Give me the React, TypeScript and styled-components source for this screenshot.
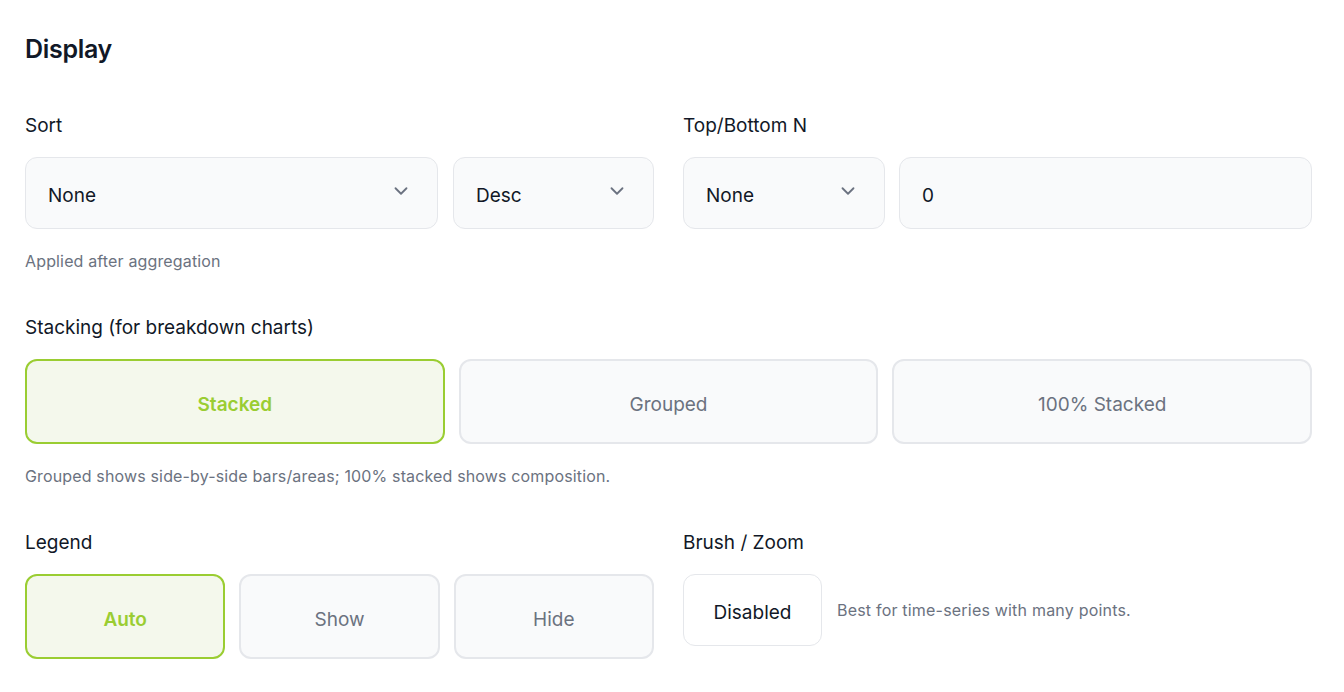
import { memo } from "react";
import styled, { createGlobalStyle } from "styled-components";
import { ChevronDown } from "lucide-react";

const GlobalStyle = createGlobalStyle`
  body {
    margin: 0;
    background: #fff;
    font-family: Inter, "Noto Sans", sans-serif;
    color: #111827;
  }
`;

const Panel = styled.main`
  padding: 32px 32px 0 25px;
  > h2 {
    margin: 0 0 48px;
    font-size: 25px;
    font-weight: 600;
    letter-spacing: -0.3px;
    line-height: 34px;
  }
`;

const Row = styled.div`
  display: grid;
  grid-template-columns: 1fr 1fr;
  column-gap: 29px;
`;

const Field = styled.section<{ $mb?: number }>`
  margin-bottom: ${(p) => p.$mb ?? 0}px;
`;

const Label = styled.h3`
  margin: 0 0 19px;
  font-size: 19px;
  font-weight: 400;
  line-height: 24px;
`;

const Controls = styled.div<{ $gap?: number }>`
  display: flex;
  gap: ${(p) => p.$gap ?? 15}px;
  align-items: center;
`;

const Select = styled.div<{ $w?: number }>`
  display: flex;
  align-items: center;
  justify-content: space-between;
  box-sizing: border-box;
  height: 72px;
  padding: 4px 25px 0 22px;
  ${(p) => (p.$w ? `width: ${p.$w}px; flex: none;` : "flex: 1;")}
  background: #f9fafb;
  border: 1px solid #e5e7eb;
  border-radius: 12px;
  font-size: 19px;
  color: #111827;
  .lucide {
    width: 22px;
    height: 22px;
    margin-top: -8px;
    color: #6b7280;
  }
`;

const Hint = styled.p`
  margin: 22px 0 0;
  font-size: 16px;
  letter-spacing: 0.15px;
  color: #6b7280;
  line-height: 20px;
`;

const Segments = styled.div<{ $cols: number }>`
  display: grid;
  grid-template-columns: repeat(${(p) => p.$cols}, 1fr);
  gap: 14px;
`;

const Segment = styled.button<{ $active?: boolean; $h: number }>`
  box-sizing: border-box;
  height: ${(p) => p.$h}px;
  padding-top: 6px;
  border-radius: 12px;
  border: 2.5px solid ${(p) => (p.$active ? "#9acd32" : "#e5e7eb")};
  background: ${(p) => (p.$active ? "#f4f8ec" : "#f9fafb")};
  color: ${(p) => (p.$active ? "#9acd32" : "#6b7280")};
  font-family: inherit;
  font-size: 19px;
  font-weight: ${(p) => (p.$active ? 600 : 400)};
  cursor: pointer;
`;

const Toggle = styled.button`
  box-sizing: border-box;
  width: 139px;
  height: 72px;
  flex: none;
  padding-top: 5px;
  background: #fff;
  border: 1px solid #e5e7eb;
  border-radius: 12px;
  font-family: inherit;
  font-size: 19px;
  font-weight: 400;
  color: #111827;
`;

const Note = styled.span`
  font-size: 16px;
  letter-spacing: 0.2px;
  color: #6b7280;
`;

const App = memo(() => {
  return (
    <>
      <GlobalStyle />
      <Panel>
        <h2>Display</h2>
        <Row>
          <Field $mb={45}>
            <Label>Sort</Label>
            <Controls>
              <Select>
                None
                <ChevronDown strokeWidth={2} />
              </Select>
              <Select $w={201}>
                Desc
                <ChevronDown strokeWidth={2} />
              </Select>
            </Controls>
            <Hint>Applied after aggregation</Hint>
          </Field>
          <Field>
            <Label>Top/Bottom N</Label>
            <Controls $gap={14}>
              <Select $w={202}>
                None
                <ChevronDown strokeWidth={2} />
              </Select>
              <Select>0</Select>
            </Controls>
          </Field>
        </Row>
        <Field $mb={45}>
          <Label>Stacking (for breakdown charts)</Label>
          <Segments $cols={3}>
            <Segment $h={85} $active>
              Stacked
            </Segment>
            <Segment $h={85}>Grouped</Segment>
            <Segment $h={85}>100% Stacked</Segment>
          </Segments>
          <Hint>Grouped shows side-by-side bars/areas; 100% stacked shows composition.</Hint>
        </Field>
        <Row>
          <Field>
            <Label>Legend</Label>
            <Segments $cols={3}>
              <Segment $h={85} $active>
                Auto
              </Segment>
              <Segment $h={85}>Show</Segment>
              <Segment $h={85}>Hide</Segment>
            </Segments>
          </Field>
          <Field>
            <Label>Brush / Zoom</Label>
            <Controls>
              <Toggle>Disabled</Toggle>
              <Note>Best for time-series with many points.</Note>
            </Controls>
          </Field>
        </Row>
      </Panel>
    </>
  );
});

export default App;
